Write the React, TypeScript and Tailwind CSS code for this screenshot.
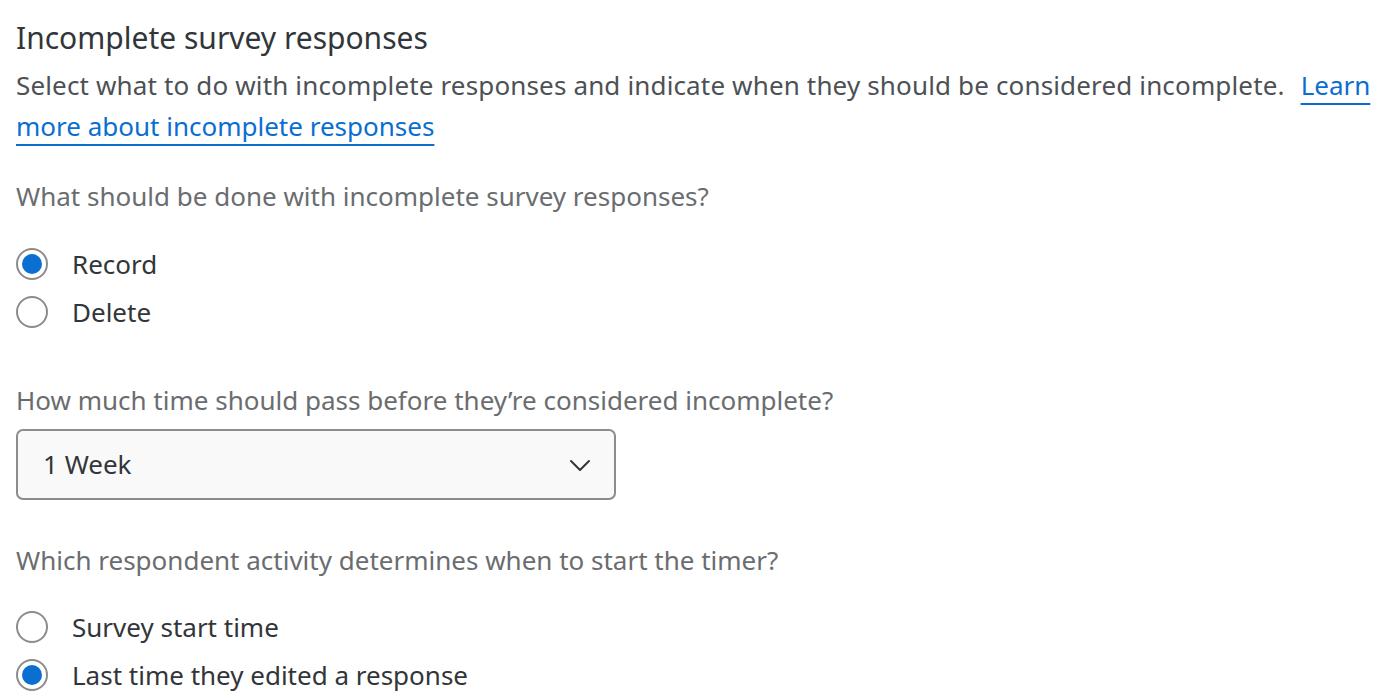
import { useState } from "react";

type Option = { value: string; label: string };

function Radio({ checked, label, onSelect }: { checked: boolean; label: string; onSelect: () => void }) {
  return (
    <button type="button" onClick={onSelect} className="flex items-center gap-[24px] h-[48px] text-left">
      <span className="w-[32px] h-[32px] rounded-full border-2 border-[#8c8c8c] bg-white flex items-center justify-center shrink-0">
        {checked && <span className="w-[20px] h-[20px] rounded-full bg-[#0b6fd1]" />}
      </span>
      <span className="text-[26px] text-[#32363a]">{label}</span>
    </button>
  );
}

function RadioGroup({ options, value, onChange }: { options: Option[]; value: string; onChange: (v: string) => void }) {
  return (
    <div className="flex flex-col">
      {options.map((o) => (
        <Radio key={o.value} checked={value === o.value} label={o.label} onSelect={() => onChange(o.value)} />
      ))}
    </div>
  );
}

export default function App() {
  const [action, setAction] = useState("record");
  const [timer, setTimer] = useState("edited");

  return (
    <div className="min-h-screen bg-white px-[16px] pt-[18px]" style={{ fontFamily: '"Noto Sans", "Open Sans", sans-serif' }}>
      <h1 className="text-[30px] leading-[40px] text-[#32363a]">Incomplete survey responses</h1>
      <p className="mt-[7px] text-[26px] leading-[41px] text-[#4d5155]">
        <span className="tracking-[0.15px]">
          Select what to do with incomplete responses and indicate when they should be considered incomplete.
        </span>
        <span className="inline-block w-[16px]" />
        <a href="#" className="text-[#0a6ed1] underline underline-offset-[8px] decoration-2">
          Learn more about incomplete responses
        </a>
      </p>

      {/* 未完了回答の扱い */}
      <div className="mt-[29px] text-[26px] leading-[40px] text-[#6a6d70]">What should be done with incomplete survey responses?</div>
      <div className="mt-[24px]">
        <RadioGroup
          options={[
            { value: "record", label: "Record" },
            { value: "delete", label: "Delete" },
          ]}
          value={action}
          onChange={setAction}
        />
      </div>

      <div className="mt-[44px] text-[26px] leading-[40px] text-[#6a6d70]">How much time should pass before they’re considered incomplete?</div>
      <div className="mt-[9px] w-[600px] h-[71px] rounded-[7px] border-2 border-[#8c8c8c] bg-[#f9f9f9] flex items-center justify-between pl-[25px] pr-[22px]">
        <span className="text-[26px] text-[#32363a]">1 Week</span>
        <svg width="24" height="24" viewBox="0 0 24 24" fill="none" stroke="#32363a" strokeWidth="2" strokeLinecap="round" strokeLinejoin="round">
          <path d="M3 8l9 9 9-9" />
        </svg>
      </div>

      <div className="mt-[40px] text-[26px] leading-[40px] text-[#6a6d70]">Which respondent activity determines when to start the timer?</div>
      <div className="mt-[23px]">
        <RadioGroup
          options={[
            { value: "start", label: "Survey start time" },
            { value: "edited", label: "Last time they edited a response" },
          ]}
          value={timer}
          onChange={setTimer}
        />
      </div>
    </div>
  );
}
